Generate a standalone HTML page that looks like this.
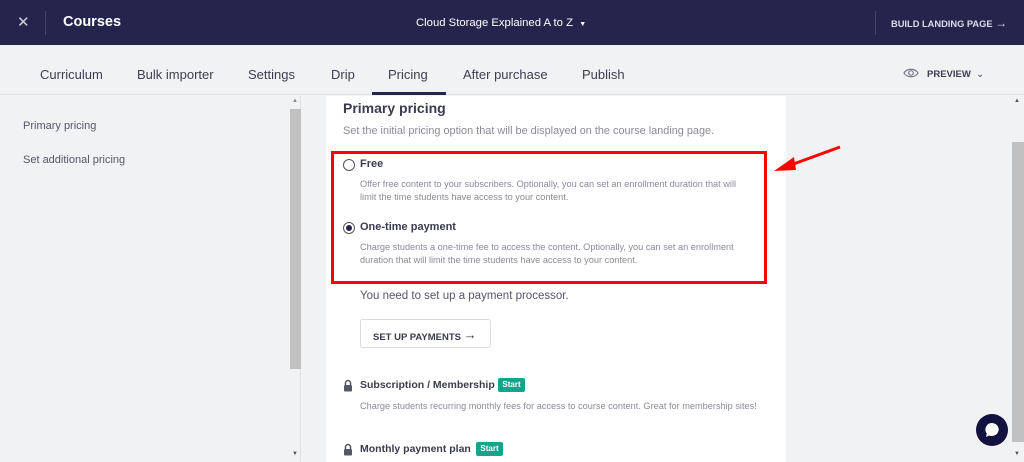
<!DOCTYPE html>
<html><head><style>
*{box-sizing:border-box;margin:0;padding:0}
body{width:1024px;height:462px;overflow:hidden;background:#f1f2f4;font-family:"Liberation Sans",sans-serif;position:relative;color:#3a3b4f}
.abs{position:absolute;white-space:nowrap}
.hdr{left:0;top:0;width:1024px;height:45px;background:#25244d;color:#fff}
.tabs{left:0;top:45px;width:1024px;height:50px;background:#f1f2f4;border-bottom:1px solid #e2e3e7}
.tab{position:absolute;top:22px;font-size:13px;color:#3c3d52}
.desc{font-size:9.2px;color:#8a8b97;line-height:13px}
</style></head><body>
<div class="abs hdr">
  <div class="abs" style="left:17px;top:13px;font-size:15px;color:#cfd0dc">✕</div>
  <div class="abs" style="left:45px;top:11px;width:1px;height:24px;background:#45446a"></div>
  <div class="abs" style="left:63px;top:14px;font-size:14.5px;font-weight:bold">Courses</div>
  <div class="abs" style="left:416px;top:17px;font-size:11.3px">Cloud Storage Explained A to Z &nbsp;<span style="font-size:7px">▼</span></div>
  <div class="abs" style="left:875px;top:11px;width:1px;height:24px;background:#45446a"></div>
  <div class="abs" style="left:891px;top:16px;font-size:9.3px;font-weight:bold;color:#dcdde6">BUILD LANDING PAGE <span style="font-size:12px;font-weight:normal">→</span></div>
</div>
<div class="abs tabs">
  <div class="tab" style="left:40px">Curriculum</div>
  <div class="tab" style="left:137px">Bulk importer</div>
  <div class="tab" style="left:248px">Settings</div>
  <div class="tab" style="left:331px">Drip</div>
  <div class="tab" style="left:388px">Pricing</div>
  <div class="tab" style="left:463px">After purchase</div>
  <div class="tab" style="left:582px">Publish</div>
  <div class="abs" style="left:372px;top:47px;width:74px;height:3px;background:#25244d"></div>
  <svg class="abs" style="left:903px;top:22px" width="16" height="12" viewBox="0 0 16 12"><path d="M1 6C4 1 12 1 15 6C12 11 4 11 1 6Z" fill="none" stroke="#77788a" stroke-width="1.2"/><circle cx="8" cy="6" r="2.3" fill="none" stroke="#77788a" stroke-width="1.2"/></svg>
  <div class="abs" style="left:927px;top:24px;font-size:9.5px;font-weight:bold;color:#3c3d52">PREVIEW &nbsp;<span style="font-weight:normal">⌄</span></div>
</div>
<!-- sidebar -->
<div class="abs" style="left:23px;top:120px;font-size:11px;color:#555669">Primary pricing</div>
<div class="abs" style="left:23px;top:154px;font-size:11px;color:#555669">Set additional pricing</div>
<div class="abs" style="left:289px;top:96px;width:12px;height:366px;background:#f1f2f4;border-right:1px solid #dfe0e3"></div>
<div class="abs" style="left:290px;top:109px;width:11px;height:260px;background:#c1c1c1"></div>
<div class="abs" style="left:292px;top:98px;font-size:6px;color:#888">▲</div>
<div class="abs" style="left:292px;top:451px;font-size:6px;color:#555">▼</div>
<!-- card -->
<div class="abs" style="left:326px;top:96px;width:460px;height:366px;background:#fff"></div>
<div class="abs" style="left:343px;top:100px;font-size:14px;font-weight:bold;color:#3a3b4f">Primary pricing</div>
<div class="abs" style="left:343px;top:125px;font-size:10.9px;color:#8a8b97">Set the initial pricing option that will be displayed on the course landing page.</div>
<div class="abs" style="left:331px;top:151px;width:436px;height:133px;border:3px solid #f00"></div>
<div class="abs" style="left:343px;top:159px;width:12px;height:12px;border:1px solid #555;border-radius:50%"></div>
<div class="abs" style="left:360px;top:158px;font-size:11px;font-weight:bold">Free</div>
<div class="abs desc" style="left:360px;top:178px">Offer free content to your subscribers. Optionally, you can set an enrollment duration that will<br>limit the time students have access to your content.</div>
<div class="abs" style="left:343px;top:222px;width:12px;height:12px;border:1px solid #555;border-radius:50%"><div style="margin:2px;width:6px;height:6px;border-radius:50%;background:#25244d"></div></div>
<div class="abs" style="left:360px;top:221px;font-size:11px;font-weight:bold">One-time payment</div>
<div class="abs desc" style="left:360px;top:241px">Charge students a one-time fee to access the content. Optionally, you can set an enrollment<br>duration that will limit the time students have access to your content.</div>
<svg class="abs" style="left:770px;top:140px" width="75" height="35"><path d="M70 7L18 26" stroke="#f00" stroke-width="3"/><path d="M4 31L24 17L26 30Z" fill="#f00"/></svg>
<div class="abs" style="left:360px;top:290px;font-size:11.5px;color:#555669">You need to set up a payment processor.</div>
<div class="abs" style="left:360px;top:319px;width:131px;height:29px;border:1px solid #d9dae0;border-radius:3px;font-size:9.5px;font-weight:bold;padding:8px 0 0 12px;color:#3a3b4f">SET UP PAYMENTS <span style="font-size:13px;font-weight:normal;position:relative;top:-1px">→</span></div>
<svg class="abs" style="left:343px;top:379px" width="10" height="13"><path d="M2.5 6V4a2.5 2.5 0 0 1 5 0v2" fill="none" stroke="#555669" stroke-width="1.5"/><rect x="1" y="6" width="8" height="6.5" rx="1" fill="#555669"/></svg>
<div class="abs" style="left:360px;top:379px;font-size:10.5px;font-weight:bold">Subscription / Membership</div>
<div class="abs" style="left:498px;top:378px;width:27px;height:14px;background:#14a38b;border-radius:2px;color:#fff;font-size:8px;font-weight:bold;text-align:center;line-height:14px">Start</div>
<div class="abs desc" style="left:360px;top:400px">Charge students recurring monthly fees for access to course content. Great for membership sites!</div>
<svg class="abs" style="left:343px;top:443px" width="10" height="13"><path d="M2.5 6V4a2.5 2.5 0 0 1 5 0v2" fill="none" stroke="#555669" stroke-width="1.5"/><rect x="1" y="6" width="8" height="6.5" rx="1" fill="#555669"/></svg>
<div class="abs" style="left:360px;top:443px;font-size:10.5px;font-weight:bold">Monthly payment plan</div>
<div class="abs" style="left:476px;top:442px;width:27px;height:14px;background:#14a38b;border-radius:2px;color:#fff;font-size:8px;font-weight:bold;text-align:center;line-height:14px">Start</div>
<!-- right scrollbar -->
<div class="abs" style="left:1011px;top:96px;width:13px;height:366px;background:#f1f2f4"></div>
<div class="abs" style="left:1012px;top:142px;width:12px;height:300px;background:#c1c1c1"></div>
<div class="abs" style="left:1014px;top:98px;font-size:6px;color:#555">▲</div>
<div class="abs" style="left:1014px;top:451px;font-size:6px;color:#555">▼</div>
<!-- chat -->
<div class="abs" style="left:976px;top:414px;width:32px;height:32px;border-radius:50%;background:#12123f"></div>
<svg class="abs" style="left:983px;top:421px" width="18" height="18"><path d="M9 2a7 6.5 0 1 1-3 12.5L3 16l0.8-3.5A6.5 6.5 0 0 1 9 2Z" fill="#fff"/></svg>
</body></html>
